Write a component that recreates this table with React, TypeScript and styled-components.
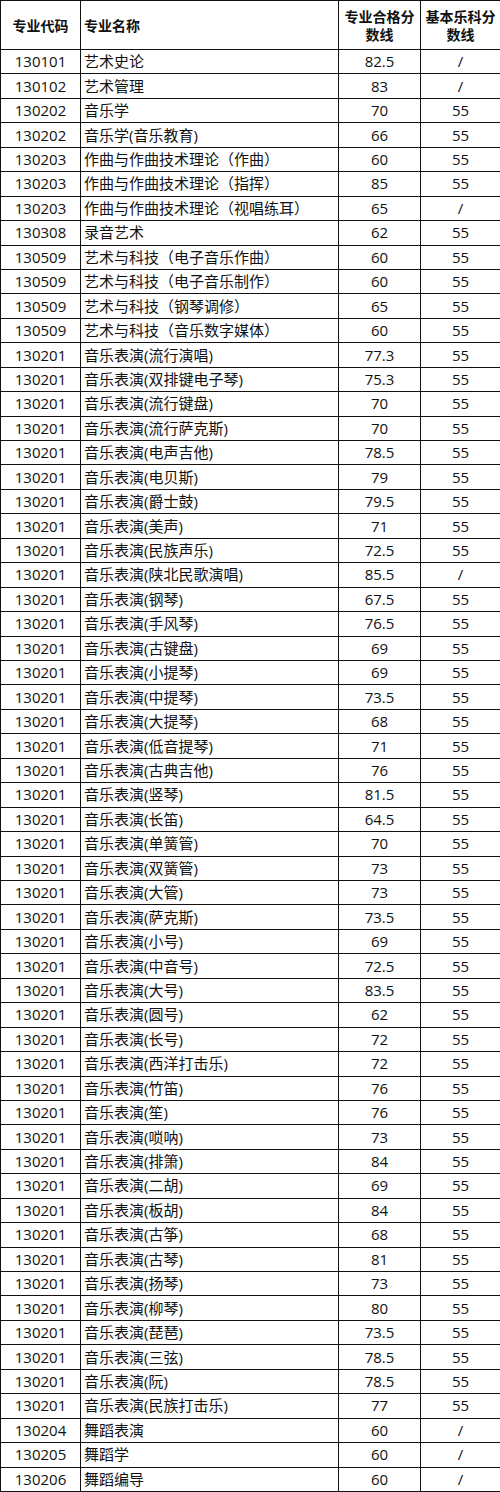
import React from "react";
import styled, { createGlobalStyle } from "styled-components";

const Global = createGlobalStyle`
  html, body { margin: 0; padding: 0; background: #fff; }
  body { font-family: "Open Sans", "Noto Sans CJK SC", sans-serif; color: #111; }
`;

const Grid = styled.div`
  box-sizing: border-box;
  width: 500px;
  height: 1492px;
  display: grid;
  grid-template-columns: 80px 258px 82px 80px;
  grid-template-rows: 49px repeat(59, 1fr);
  border-top: 1px solid #111;
  border-left: 1px solid #111;
`;

const Cell = styled.div<{ $align?: "left" | "center"; $head?: boolean }>`
  box-sizing: border-box;
  display: flex;
  align-items: center;
  justify-content: ${(p) => (p.$align === "left" ? "flex-start" : "center")};
  text-align: ${(p) => (p.$align === "left" ? "left" : "center")};
  padding: ${(p) => (p.$align === "left" ? "0 0 0 3px" : "0")};
  border-right: 1px solid #111;
  border-bottom: 1px solid #111;
  font-family: ${(p) =>
    p.$head ? `"Noto Sans CJK SC", sans-serif` : `"Open Sans", "Noto Sans CJK SC", sans-serif`};
  font-size: ${(p) => (p.$head ? "14px" : "15px")};
  font-weight: ${(p) => (p.$head ? 700 : 400)};
  line-height: ${(p) => (p.$head ? "18px" : "1")};
  white-space: nowrap;
  color: #111;
`;

type Row = [string, string, string, string];

const rows: Row[] = [
  ["130101", "艺术史论", "82.5", "/"],
  ["130102", "艺术管理", "83", "/"],
  ["130202", "音乐学", "70", "55"],
  ["130202", "音乐学(音乐教育)", "66", "55"],
  ["130203", "作曲与作曲技术理论（作曲）", "60", "55"],
  ["130203", "作曲与作曲技术理论（指挥）", "85", "55"],
  ["130203", "作曲与作曲技术理论（视唱练耳）", "65", "/"],
  ["130308", "录音艺术", "62", "55"],
  ["130509", "艺术与科技（电子音乐作曲）", "60", "55"],
  ["130509", "艺术与科技（电子音乐制作）", "60", "55"],
  ["130509", "艺术与科技（钢琴调修）", "65", "55"],
  ["130509", "艺术与科技（音乐数字媒体）", "60", "55"],
  ["130201", "音乐表演(流行演唱)", "77.3", "55"],
  ["130201", "音乐表演(双排键电子琴)", "75.3", "55"],
  ["130201", "音乐表演(流行键盘)", "70", "55"],
  ["130201", "音乐表演(流行萨克斯)", "70", "55"],
  ["130201", "音乐表演(电声吉他)", "78.5", "55"],
  ["130201", "音乐表演(电贝斯)", "79", "55"],
  ["130201", "音乐表演(爵士鼓)", "79.5", "55"],
  ["130201", "音乐表演(美声)", "71", "55"],
  ["130201", "音乐表演(民族声乐)", "72.5", "55"],
  ["130201", "音乐表演(陕北民歌演唱)", "85.5", "/"],
  ["130201", "音乐表演(钢琴)", "67.5", "55"],
  ["130201", "音乐表演(手风琴)", "76.5", "55"],
  ["130201", "音乐表演(古键盘)", "69", "55"],
  ["130201", "音乐表演(小提琴)", "69", "55"],
  ["130201", "音乐表演(中提琴)", "73.5", "55"],
  ["130201", "音乐表演(大提琴)", "68", "55"],
  ["130201", "音乐表演(低音提琴)", "71", "55"],
  ["130201", "音乐表演(古典吉他)", "76", "55"],
  ["130201", "音乐表演(竖琴)", "81.5", "55"],
  ["130201", "音乐表演(长笛)", "64.5", "55"],
  ["130201", "音乐表演(单簧管)", "70", "55"],
  ["130201", "音乐表演(双簧管)", "73", "55"],
  ["130201", "音乐表演(大管)", "73", "55"],
  ["130201", "音乐表演(萨克斯)", "73.5", "55"],
  ["130201", "音乐表演(小号)", "69", "55"],
  ["130201", "音乐表演(中音号)", "72.5", "55"],
  ["130201", "音乐表演(大号)", "83.5", "55"],
  ["130201", "音乐表演(圆号)", "62", "55"],
  ["130201", "音乐表演(长号)", "72", "55"],
  ["130201", "音乐表演(西洋打击乐)", "72", "55"],
  ["130201", "音乐表演(竹笛)", "76", "55"],
  ["130201", "音乐表演(笙)", "76", "55"],
  ["130201", "音乐表演(唢呐)", "73", "55"],
  ["130201", "音乐表演(排箫)", "84", "55"],
  ["130201", "音乐表演(二胡)", "69", "55"],
  ["130201", "音乐表演(板胡)", "84", "55"],
  ["130201", "音乐表演(古筝)", "68", "55"],
  ["130201", "音乐表演(古琴)", "81", "55"],
  ["130201", "音乐表演(扬琴)", "73", "55"],
  ["130201", "音乐表演(柳琴)", "80", "55"],
  ["130201", "音乐表演(琵琶)", "73.5", "55"],
  ["130201", "音乐表演(三弦)", "78.5", "55"],
  ["130201", "音乐表演(阮)", "78.5", "55"],
  ["130201", "音乐表演(民族打击乐)", "77", "55"],
  ["130204", "舞蹈表演", "60", "/"],
  ["130205", "舞蹈学", "60", "/"],
  ["130206", "舞蹈编导", "60", "/"],
];

export default function App() {
  return (
    <>
      <Global />
      <Grid>
        <Cell $head>专业代码</Cell>
        <Cell $head $align="left">专业名称</Cell>
        <Cell $head>
          专业合格分
          <br />
          数线
        </Cell>
        <Cell $head>
          基本乐科分
          <br />
          数线
        </Cell>
        {rows.map((r, i) => (
          <React.Fragment key={i}>
            <Cell>{r[0]}</Cell>
            <Cell $align="left">{r[1]}</Cell>
            <Cell>{r[2]}</Cell>
            <Cell>{r[3]}</Cell>
          </React.Fragment>
        ))}
      </Grid>
    </>
  );
}
